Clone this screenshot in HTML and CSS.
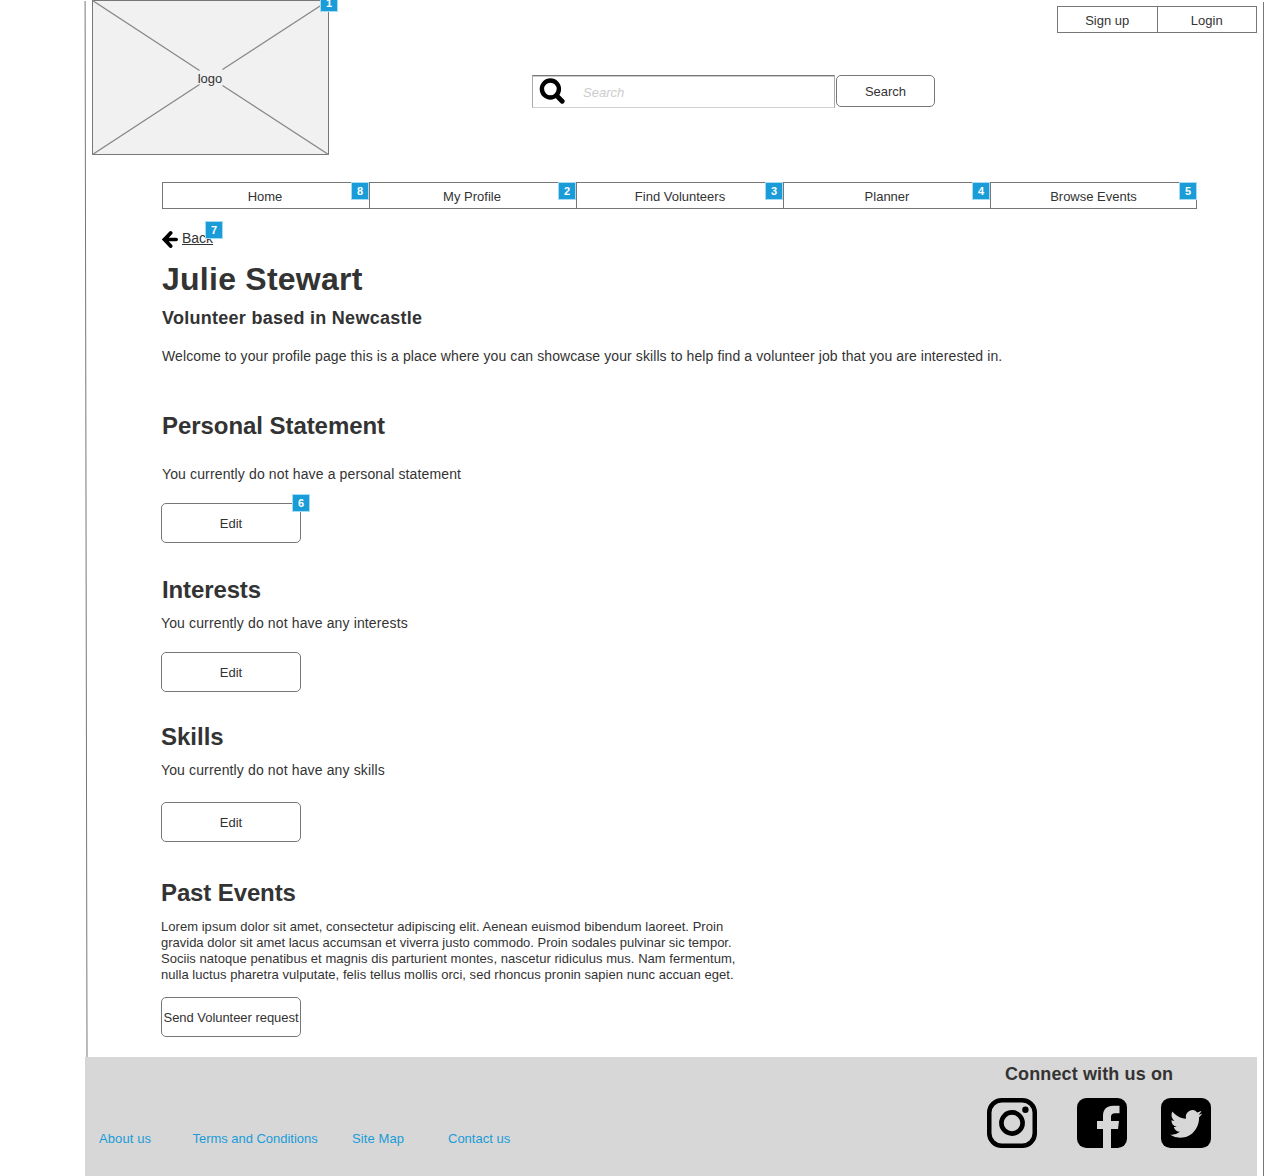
FILE: index.html
```html
<!DOCTYPE html>
<html lang="en">
<head>
<meta charset="utf-8">
<title>Julie Stewart</title>
<link rel="stylesheet" href="styles.css">
</head>
<body>
<div class="page">
  <svg class="frame" width="1264" height="1176" viewBox="0 0 1264 1176" aria-hidden="true">
    <path d="M85.1 1L87 1057" stroke="#777" fill="none"/>
    <path d="M1263.5 2V1176" stroke="#777" fill="none"/>
  </svg>
  <header class="header">
    <div class="logo">
      <svg class="logo-cross" width="237" height="155" viewBox="0 0 237 155" aria-hidden="true">
        <path d="M.5 .5L107.500 70.500M130.500 69.500L236.500 .5M.5 154.500L107.500 84.500M130.500 85.500L236.500 154.500" stroke="#888" stroke-width="1.300" fill="none"/>
      </svg>
      <span class="logo-text">logo</span>
      <span class="note note-logo">1</span>
    </div>
    <div class="search">
      <div class="search-field">
        <svg class="search-icon" width="26" height="26" viewBox="0 0 26 26"><circle cx="11.400" cy="11" r="8.500" fill="none" stroke="#000" stroke-width="4.400"/><path d="M17.500 17.500L23.200 23.200" stroke="#000" stroke-width="4.800" stroke-linecap="round"/></svg>
        <span class="placeholder">Search</span>
      </div>
      <div class="search-button">Search</div>
    </div>
    <div class="auth"><span>Sign up</span><span>Login</span></div>
  </header>
  <nav class="nav">
    <div class="tab tab-near">Home<span class="note">8</span></div>
    <div class="tab tab-near">My Profile<span class="note">2</span></div>
    <div class="tab">Find Volunteers<span class="note">3</span></div>
    <div class="tab">Planner<span class="note">4</span></div>
    <div class="tab tab-last">Browse Events<span class="note note-last">5</span></div>
  </nav>
  <main class="main">
    <div class="back">
      <svg width="16" height="18" viewBox="0 0 16 18"><path d="M8.600 3L2.600 9.500L8.600 16" fill="none" stroke="#000" stroke-width="3.800" stroke-linecap="round"/><path d="M0 9.500L7 3V16Z"/><path d="M4 9.500H14.200" stroke="#000" stroke-width="3.600" stroke-linecap="round"/></svg>
      <a class="back-link">Back</a>
      <span class="note note-back">7</span>
    </div>
    <h1 class="name">Julie Stewart</h1>
    <h2 class="based">Volunteer based in Newcastle</h2>
    <p class="text intro">Welcome to your profile page this is a place where you can showcase your skills to help find a volunteer job that you are interested in.</p>
    <section class="statement">
      <h2 class="title">Personal Statement</h2>
      <p class="text">You currently do not have a personal statement</p>
      <div class="button">Edit<span class="note note-edit">6</span></div>
    </section>
    <section class="interests">
      <h2 class="title">Interests</h2>
      <p class="text">You currently do not have any interests</p>
      <div class="button">Edit</div>
    </section>
    <section class="skills">
      <h2 class="title">Skills</h2>
      <p class="text">You currently do not have any skills</p>
      <div class="button">Edit</div>
    </section>
    <section class="events">
      <h2 class="title">Past Events</h2>
      <p class="lorem">Lorem ipsum dolor sit amet, consectetur adipiscing elit. Aenean euismod bibendum laoreet. Proin<br><span class="tight">gravida dolor sit amet lacus accumsan et viverra justo commodo. Proin sodales pulvinar sic tempor.</span><br>Sociis natoque penatibus et magnis dis parturient montes, nascetur ridiculus mus. Nam fermentum,<br>nulla luctus pharetra vulputate, felis tellus mollis orci, sed rhoncus pronin sapien nunc accuan eget.</p>
      <div class="button request">Send Volunteer request</div>
    </section>
  </main>
  <footer class="footer">
    <div class="links"><a class="about">About us</a><a class="terms">Terms and Conditions</a><a class="sitemap">Site Map</a><a>Contact us</a></div>
    <div class="connect">
      <h3 class="connect-title">Connect with us on</h3>
      <div class="socials">
        <svg class="instagram" width="50" height="50" viewBox="0 0 50 50"><rect x="2.250" y="2.250" width="45.500" height="45.500" rx="12.500" fill="none" stroke="#000" stroke-width="4.500"/><circle cx="25" cy="25" r="10.600" fill="none" stroke="#000" stroke-width="4.600"/><circle cx="38.400" cy="11.700" r="3.200"/></svg>
        <svg class="facebook" width="50" height="50" viewBox="0 0 50 50"><rect width="50" height="50" rx="9.300"/><path d="M26 50V31H20V23H26V18C26 11 30 7.700 36 7.700H42.500V15.300H38Q34 15.300 34 19V23H42L41 31H34V50Z" fill="#d7d7d7"/></svg>
        <svg class="twitter" width="50" height="50" viewBox="0 0 50 50"><rect width="50" height="50" rx="9.300"/><path transform="translate(9.200 9.100) scale(1.340 1.410)" d="M23.950 4.570a10 10 0 0 1-2.820.770 4.960 4.960 0 0 0 2.160-2.720c-.950.550-2 .950-3.130 1.180a4.920 4.920 0 0 0-8.380 4.480C7.690 8.090 4.070 6.130 1.640 3.160a4.820 4.820 0 0 0-.670 2.480c0 1.710.870 3.210 2.190 4.100a4.900 4.900 0 0 1-2.230-.620v.060a4.920 4.920 0 0 0 3.950 4.830 5 5 0 0 1-2.210.080 4.940 4.940 0 0 0 4.600 3.420A9.870 9.870 0 0 1 0 19.540a14 14 0 0 0 7.550 2.210c9.050 0 14-7.500 14-13.980 0-.210 0-.420-.020-.630a9.940 9.940 0 0 0 2.420-2.570z" fill="#d7d7d7"/></svg>
      </div>
    </div>
  </footer>
</div>
</body>
</html>
```
FILE: styles.css
```css
* { box-sizing: border-box; }
body { margin: 0; background: #fff; color: #333; font: 13px/15px "Liberation Sans", Arial, sans-serif; }
h1, h2, h3, p { margin: 0; }
svg { display: block; flex: none; }
.page { position: relative; width: 1264px; height: 1176px; overflow: hidden; }
.frame { position: absolute; left: 0; top: 0; pointer-events: none; }

.header { display: flex; align-items: flex-start; height: 155px; padding: 0 7px 0 92px; }
.logo { position: relative; display: flex; align-items: center; justify-content: center; width: 237px; height: 155px; border: 1px solid #777; background: #f1f1f1; }
.logo-cross { position: absolute; left: -1px; top: -1px; }
.logo-text { position: relative; padding: 2px 1px 0 0; }
.search { display: flex; gap: 1px; margin: 75px 0 0 203px; }
.search-field { display: flex; width: 303px; height: 33px; padding: 2px 0 0 6px; border: 1px solid #d0d0d0; border-top: 1px solid #777; border-left-color: #aaa; border-right-color: #aaa; box-shadow: inset 0 1px #ccc; }
.placeholder { margin: 7px 0 0 18px; color: #ccc; font-style: italic; }
.search-button { display: flex; align-items: center; justify-content: center; width: 99px; height: 32px; border: 1px solid #777; border-radius: 5px; }
.auth { display: flex; width: 200px; height: 27px; margin: 6px 0 0 auto; border: 1px solid #777; }
.auth span { flex: 1; padding-top: 6px; text-align: center; }
.auth span + span { border-left: 1px solid #777; }

.nav { display: flex; width: 1035px; height: 27px; margin: 27px 0 0 162px; border: 1px solid #777; border-left: 0; }
.tab { position: relative; flex: none; width: 207px; padding-top: 6px; border-left: 1px solid #777; text-align: center; }
.tab-near { padding-right: 2px; }
.tab-last { width: 206px; }
.note { position: absolute; top: -1px; right: 0; width: 18px; height: 18px; border: 1px solid #a5dcf2; background: #1a9cd8; color: #fff; font-size: 11px; font-weight: bold; line-height: 16px; text-align: center; letter-spacing: 0; }
.note-logo { top: -7px; right: -10px; }
.note-last { right: -1px; }
.note-back { top: -9px; left: 43px; }
.note-edit { top: -10px; right: -10px; }

.main { height: 848px; padding: 21px 0 0 162px; }
.back { position: relative; display: flex; gap: 4px; height: 18px; font-size: 14px; line-height: 16px; }
.back-link { text-decoration: underline; }
.name { margin-top: 12px; font-size: 32px; line-height: 38px; letter-spacing: .25px; }
.based { margin-top: 10px; font-size: 18px; line-height: 20px; letter-spacing: .27px; }
.text { font-size: 14px; line-height: 16px; letter-spacing: .135px; }
.intro { margin-top: 20px; letter-spacing: .098px; }
.title { font-size: 24px; line-height: 28px; letter-spacing: -.06px; }
.button { position: relative; display: flex; align-items: center; justify-content: center; width: 140px; height: 40px; border: 1px solid #777; border-radius: 5px; white-space: nowrap; }
.request { letter-spacing: -.04px; }
.statement { margin-top: 48px; }
.statement .text { margin-top: 26px; }
.statement .button { margin: 21px 0 0 -1px; }
.interests { margin: 33px 0 0 -1px; }
.interests .title { padding-left: 1px; letter-spacing: -.12px; }
.interests .text, .skills .text { margin-top: 11px; }
.interests .button { margin-top: 21px; }
.skills { margin: 31px 0 0 -1px; }
.skills .title { letter-spacing: 0; }
.skills .button { margin-top: 24px; }
.events { margin: 37px 0 0 -1px; }
.events .title { letter-spacing: -.12px; }
.lorem { margin-top: 12px; line-height: 16px; white-space: nowrap; letter-spacing: .038px; }
.tight { letter-spacing: -.01px; }
.events .button { margin-top: 14px; }

.footer { display: flex; justify-content: space-between; width: 1172px; height: 119px; margin-left: 85px; padding: 7px 46px 0 14px; background: #d7d7d7; }
.links { display: flex; padding-top: 67px; color: #1a9cd8; }
.about { width: 93.5px; letter-spacing: .1px; }
.terms { width: 159.5px; letter-spacing: -.03px; }
.sitemap { width: 96px; letter-spacing: .1px; }
.connect { width: 224px; }
.connect-title { margin-left: 18px; font-size: 18px; line-height: 20px; white-space: nowrap; letter-spacing: .12px; }
.socials { display: flex; margin-top: 14px; }
.facebook { margin-left: 40px; }
.twitter { margin-left: 34px; }
```
